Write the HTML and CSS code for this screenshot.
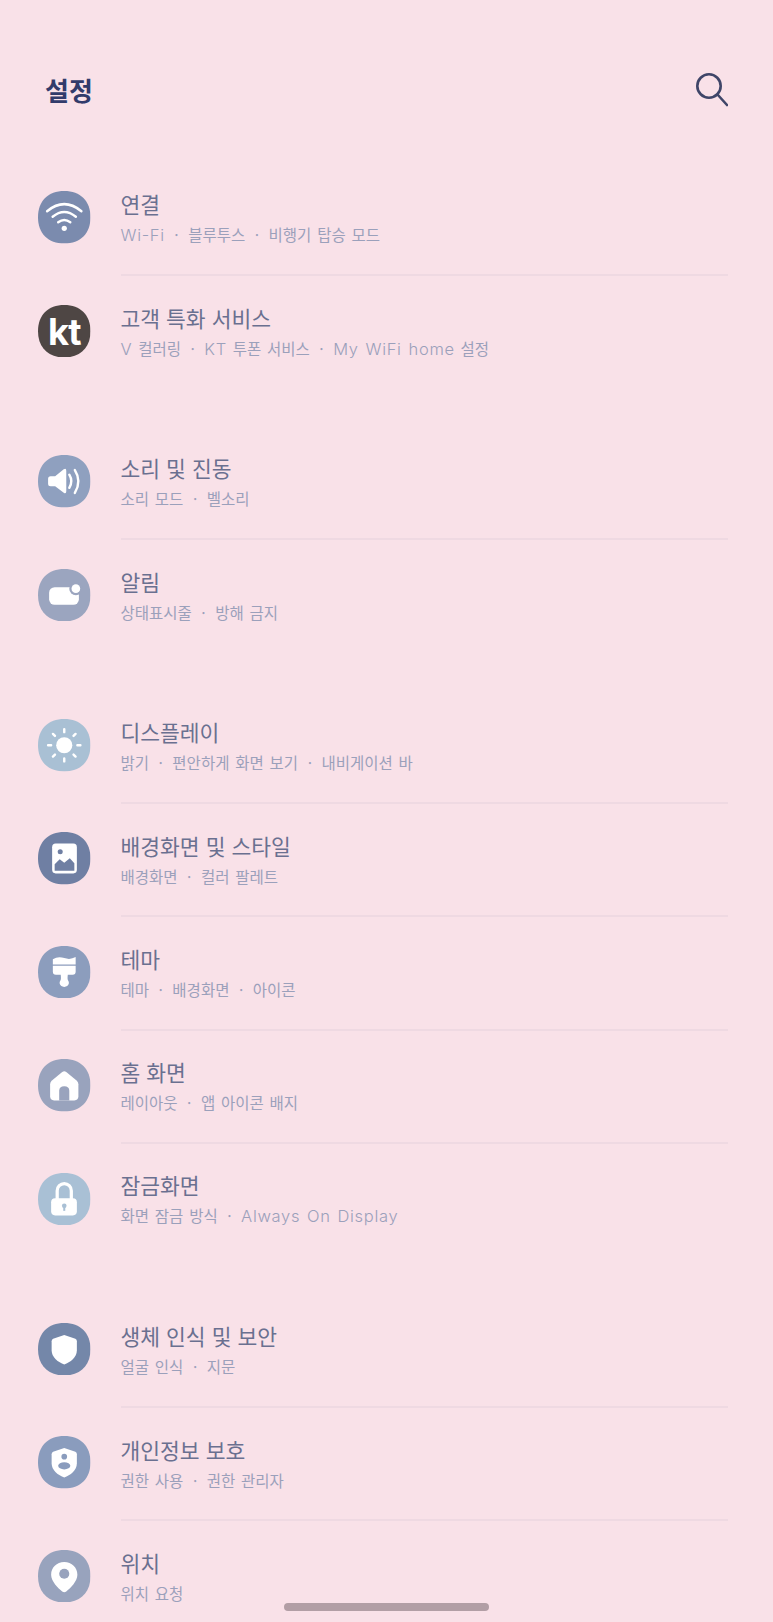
FILE: index.html
```html
<!DOCTYPE html>
<html lang="ko">

<head>
    <meta charset="utf-8">
    <meta name="viewport" content="width=device-width, initial-scale=1.0">
    <title>설정</title>
    <link rel="stylesheet" href="styles.css">
</head>

<body>
    <svg class="defs" aria-hidden="true">
        <symbol id="sq" viewBox="0 0 52 52">
            <path d="M26 0C42 0 52 10 52 26S42 52 26 52 0 42 0 26 10 0 26 0Z" fill="currentColor"/>
        </symbol>
    </svg>

    <header class="top">
        <h1>설정</h1>
        <svg class="search" viewBox="0 0 36 36" aria-label="검색">
            <circle cx="17" cy="14" r="11.7"/>
            <path d="M25.5 22.5L35 33"/>
        </svg>
    </header>

    <section class="group">
        <div class="row">
            <svg class="ico wifi" viewBox="0 0 52 52">
                <use href="#sq"/>
                <path class="line" d="M9 20Q26 6 43 20M14.5 25.5Q26 16 37.5 25.5M20 31Q26 26.5 32 31"/>
                <circle class="solid" cx="26" cy="37" r="2.6"/>
            </svg>
            <div class="text">
                <h2>연결</h2>
                <p><span class="en">Wi-Fi</span><span class="sep">·</span>블루투스<span class="sep">·</span>비행기 탑승 모드</p>
            </div>
        </div>
        <div class="row">
            <svg class="ico kt" viewBox="0 0 52 52">
                <use href="#sq"/>
                <text class="solid" x="26" y="40" text-anchor="middle">kt</text>
            </svg>
            <div class="text">
                <h2>고객 특화 서비스</h2>
                <p><span class="en">V</span> 컬러링<span class="sep">·</span><span class="en">KT</span> 투폰 서비스<span class="sep">·</span><span class="en">My WiFi home</span> 설정</p>
            </div>
        </div>
    </section>

    <section class="group">
        <div class="row">
            <svg class="ico sound" viewBox="0 0 52 52">
                <use href="#sq"/>
                <path class="solid" d="M10 23.5Q10 21 12.5 21H17L25.5 14Q28 12.5 28 15.5V36Q28 39 25.5 37.5L17 31H12.5Q10 31 10 28.5Z"/>
                <path class="line" d="M31 19.5Q35 26 31 32.5M36.5 15Q43.5 26 36.5 37.5"/>
            </svg>
            <div class="text">
                <h2>소리 및 진동</h2>
                <p>소리 모드<span class="sep">·</span>벨소리</p>
            </div>
        </div>
        <div class="row">
            <svg class="ico notify" viewBox="0 0 52 52">
                <use href="#sq"/>
                <rect class="solid" x="11" y="18" width="29.5" height="17.5" rx="5.5"/>
                <circle class="hole" cx="37.5" cy="19.5" r="6.5"/>
                <circle class="solid" cx="37.5" cy="19.5" r="4.3"/>
            </svg>
            <div class="text">
                <h2>알림</h2>
                <p>상태표시줄<span class="sep">·</span>방해 금지</p>
            </div>
        </div>
    </section>

    <section class="group">
        <div class="row">
            <svg class="ico sun" viewBox="0 0 52 52">
                <use href="#sq"/>
                <circle class="solid" cx="26" cy="26" r="8"/>
                <path class="line" d="M26 10V13M26 39V42M10 26H13M39 26H42M14.8 14.8L16.8 16.8M35.2 35.2L37.2 37.2M14.8 37.2L16.8 35.2M35.2 16.8L37.2 14.8"/>
            </svg>
            <div class="text">
                <h2>디스플레이</h2>
                <p>밝기<span class="sep">·</span>편안하게 화면 보기<span class="sep">·</span>내비게이션 바</p>
            </div>
        </div>
        <div class="row">
            <svg class="ico wall" viewBox="0 0 52 52">
                <use href="#sq"/>
                <rect class="solid" x="14" y="11.5" width="24.5" height="29.5" rx="3.5"/>
                <circle class="hole" cx="22" cy="19.5" r="2.5"/>
                <path class="hole" d="M16.5 38.5V32L21.5 27L26 30.5L31.5 26L36 31V38.5Z"/>
            </svg>
            <div class="text">
                <h2>배경화면 및 스타일</h2>
                <p>배경화면<span class="sep">·</span>컬러 팔레트</p>
            </div>
        </div>
        <div class="row">
            <svg class="ico brush" viewBox="0 0 52 52">
                <use href="#sq"/>
                <path class="solid" d="M14.7 13Q20 10 26 12T37.3 11V18.2H14.7Z"/>
                <path class="solid" d="M14.7 19.6H37.3V25.5Q37.3 28.5 34.3 28.5H29.5Q29 33 29.7 34Q31 35.5 30.5 37.5Q29.5 40.5 26 40.5T21.5 37.5Q21 35.5 22.3 34Q23 33 22.5 28.5H17.7Q14.7 28.5 14.7 25.5Z"/>
            </svg>
            <div class="text">
                <h2>테마</h2>
                <p>테마<span class="sep">·</span>배경화면<span class="sep">·</span>아이콘</p>
            </div>
        </div>
        <div class="row">
            <svg class="ico home" viewBox="0 0 52 52">
                <use href="#sq"/>
                <path class="solid" d="M24 12.8Q26 11.5 28 12.8L38.5 21.5Q40 23 40 25V37Q40 41 36 41H16Q12 41 12 37V25Q12 23 13.5 21.5Z"/>
                <path class="hole" d="M21 41V31.5Q21 27 26 27T31 31.5V41Z"/>
            </svg>
            <div class="text">
                <h2>홈 화면</h2>
                <p>레이아웃<span class="sep">·</span>앱 아이콘 배지</p>
            </div>
        </div>
        <div class="row">
            <svg class="ico lock" viewBox="0 0 52 52">
                <use href="#sq"/>
                <path class="line thick" d="M19 26V17.5A7 7 0 0 1 33 17.5V26"/>
                <rect class="solid" x="13" y="25" width="25.5" height="17" rx="4"/>
                <circle class="hole" cx="26" cy="32.5" r="2.3"/>
                <path class="hole" d="M25 33H27V37.5H25Z"/>
            </svg>
            <div class="text">
                <h2>잠금화면</h2>
                <p>화면 잠금 방식<span class="sep">·</span><span class="en">Always On Display</span></p>
            </div>
        </div>
    </section>

    <section class="group">
        <div class="row">
            <svg class="ico bio" viewBox="0 0 52 52">
                <use href="#sq"/>
                <path class="solid" d="M26 12L37 15.5Q38.5 16 38.5 18V27C38.5 34 32 39 26 41C20 39 13.5 34 13.5 27V18Q13.5 16 15 15.5Z"/>
            </svg>
            <div class="text">
                <h2>생체 인식 및 보안</h2>
                <p>얼굴 인식<span class="sep">·</span>지문</p>
            </div>
        </div>
        <div class="row">
            <svg class="ico privacy" viewBox="0 0 52 52">
                <use href="#sq"/>
                <path class="solid" d="M26 12L37 15.5Q38.5 16 38.5 18V27C38.5 34 32 39 26 41C20 39 13.5 34 13.5 27V18Q13.5 16 15 15.5Z"/>
                <circle class="hole" cx="26" cy="20.5" r="2.8"/>
                <ellipse class="hole" cx="26" cy="29.5" rx="6" ry="3.6"/>
            </svg>
            <div class="text">
                <h2>개인정보 보호</h2>
                <p>권한 사용<span class="sep">·</span>권한 관리자</p>
            </div>
        </div>
        <div class="row">
            <svg class="ico pin" viewBox="0 0 52 52">
                <use href="#sq"/>
                <path class="solid" d="M26 12C33.5 12 39 17.5 39 24.5C39 31 32 38 28 41Q26 42.5 24 41C20 38 13 31 13 24.5C13 17.5 18.5 12 26 12Z"/>
                <circle class="hole" cx="26" cy="23.5" r="5"/>
            </svg>
            <div class="text">
                <h2>위치</h2>
                <p>위치 요청</p>
            </div>
        </div>
    </section>

    <div class="homebar"></div>
</body>

</html>
```

FILE: styles.css
```css
html, body {
    margin: 0;
    height: 1622px;
    overflow: hidden;
}

body {
    position: relative;
    background-color: #f9e1e8;
    font-family: "Noto Sans CJK KR", "Noto Sans", sans-serif;
}

.defs {
    display: none;
}

.top {
    display: flex;
    justify-content: space-between;
    align-items: center;
    box-sizing: border-box;
    height: 161px;
    padding: 17px 45px 0;
}

h1 {
    margin: 0;
    font-size: 26px;
    font-weight: 700;
    color: #323b6b;
}

.search {
    width: 36px;
    height: 36px;
    margin-top: 2px;
    fill: none;
    stroke: #3f4568;
    stroke-width: 2.6;
    stroke-linecap: round;
}

.group {
    margin-bottom: 37px;
}

.row {
    display: flex;
    align-items: center;
    gap: 30px;
    height: 113.4px;
    padding-left: 38px;
    padding-right: 45px;
}

.ico {
    flex: none;
    width: 52.5px;
    height: 52.5px;
}

.solid {
    fill: #fff;
}

.hole {
    fill: currentColor;
}

.line {
    fill: none;
    stroke: #fff;
    stroke-width: 2.4;
    stroke-linecap: round;
}

.thick {
    stroke-width: 3.2;
}

.wifi { color: #7b8bae; }
.kt { color: #4e4644; }
.sound { color: #8fa0bf; }
.notify { color: #9ba5bf; }
.sun { color: #a9c0d4; }
.wall { color: #6f7fa3; }
.brush { color: #8c9dbd; }
.home { color: #99a3bd; }
.lock { color: #a9c0d5; }
.bio { color: #7487a9; }
.privacy { color: #8a9cbd; }
.pin { color: #98a3bd; }

.kt text {
    font-family: "Inter", sans-serif;
    font-size: 36px;
    font-weight: 700;
    letter-spacing: -1px;
}

.text {
    flex: 1;
    height: 100%;
    display: flex;
    flex-direction: column;
    justify-content: center;
    box-sizing: border-box;
    padding-bottom: 2px;
    border-top: 2px solid transparent;
}

.row + .row .text {
    border-top-color: #efd9e2;
}

h2 {
    margin: 0;
    font-size: 21.5px;
    font-weight: 400;
    line-height: 31px;
    color: #6a7090;
}

.text p {
    margin: 3px 0 0;
    font-size: 15.5px;
    line-height: 24px;
    word-spacing: 1.5px;
    color: #9ba0bb;
}

.en {
    font-family: "Inter", sans-serif;
    font-size: 16.5px;
    font-weight: 300;
    letter-spacing: 0.7px;
}

.sep {
    margin: 0 9.5px;
}

.homebar {
    position: absolute;
    left: 284px;
    top: 1603px;
    width: 205px;
    height: 8px;
    border-radius: 4px;
    background-color: #b29ea5;
}
```
